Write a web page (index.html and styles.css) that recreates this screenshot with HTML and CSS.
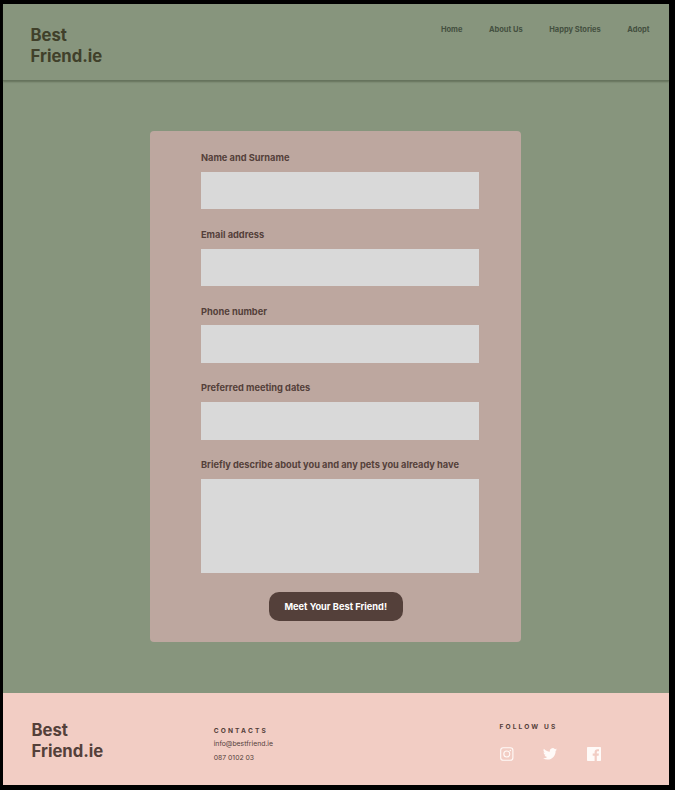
FILE: index.html
```html
<!DOCTYPE html>
<html lang="en">
<head>
<meta charset="utf-8">
<title>Best Friend.ie</title>
<link rel="stylesheet" href="styles.css">
</head>
<body>
<div class="page">
  <header class="header">
    <div class="logo">Best<br>Friend.ie</div>
    <nav class="nav">
      <a>Home</a>
      <a>About Us</a>
      <a>Happy Stories</a>
      <a>Adopt</a>
    </nav>
  </header>
  <main class="main">
    <form class="card">
      <label class="field"><span class="label">Name and Surname</span><input class="input" type="text"></label>
      <label class="field"><span class="label">Email address</span><input class="input" type="text"></label>
      <label class="field"><span class="label">Phone number</span><input class="input" type="text"></label>
      <label class="field"><span class="label">Preferred meeting dates</span><input class="input" type="text"></label>
      <label class="field field-tall"><span class="label">Briefly describe about you and any pets you already have</span><textarea class="input area"></textarea></label>
      <button class="button" type="button">Meet Your Best Friend!</button>
    </form>
  </main>
  <footer class="footer">
    <div class="logo logo-footer">Best<br>Friend.ie</div>
    <div class="contacts">
      <h2 class="heading">CONTACTS</h2>
      <p class="detail">info@bestfriend.ie</p>
      <p class="detail">087 0102 03</p>
    </div>
    <div class="follow">
      <h2 class="heading">FOLLOW US</h2>
      <div class="icons">
        <svg class="icon" viewBox="0 0 14 14" fill="none" stroke="#fffaf8"><rect x=".7" y=".7" width="12.2" height="12.6" rx="2.6" stroke-width="1.1"/><circle cx="6.8" cy="7" r="3" stroke-width="1.1"/><circle cx="10.3" cy="3.6" r=".75" fill="#fffaf8" stroke="none"/></svg>
        <svg class="icon" viewBox="0 2 24 20.5" fill="#fffaf8"><path d="M23.95 4.57a10 10 0 0 1-2.82.77 4.96 4.96 0 0 0 2.16-2.72c-.95.55-2 .95-3.13 1.18a4.92 4.92 0 0 0-8.38 4.48C7.69 8.09 4.07 6.13 1.64 3.16a4.9 4.9 0 0 0 1.52 6.57 4.9 4.9 0 0 1-2.23-.61v.06a4.92 4.92 0 0 0 3.95 4.83 5 5 0 0 1-2.21.08 4.94 4.94 0 0 0 4.6 3.42A9.87 9.87 0 0 1 0 19.54a14 14 0 0 0 7.55 2.21c9.05 0 14-7.5 14-13.98 0-.21 0-.42-.02-.63a9.94 9.94 0 0 0 2.42-2.57z"/></svg>
        <svg class="icon" viewBox="0 0 14 14" fill="#fffaf8"><path d="M.8 0h12.4a.8.8 0 0 1 .8.8v12.4a.8.8 0 0 1-.8.8h-3.4V8.7h1.8l.3-2.1H9.8V5.3c0-.7.3-1.1 1.1-1.1h1.1V2.3c-.3 0-.9-.1-1.6-.1-1.7 0-2.8 1-2.8 2.9v1.5H5.7v2.1h1.9V14H.8a.8.8 0 0 1-.8-.8V.8A.8.8 0 0 1 .8 0z"/></svg>
      </div>
    </div>
  </footer>
</div>
</body>
</html>
```
FILE: styles.css
```css
* { box-sizing: border-box; }
body {
  margin: 0;
  padding: 4px 6px 5px 3px;
  background: #000;
  font-family: Inter, "Liberation Sans", sans-serif;
  color: #54403a;
}
.page {
  height: 781px;
  display: flex;
  flex-direction: column;
  background: #87957d;
}
.header {
  height: 77px;
  flex: none;
  display: flex;
  justify-content: space-between;
  padding: 21px 19.5px 0 27.5px;
  border-bottom: 1px solid #66735d;
  box-shadow: 0 1px 1.5px rgba(50, 60, 40, .4);
}
.logo {
  font-size: 16.7px;
  line-height: 20.5px;
  font-weight: 700;
  color: #40402a;
}
.nav {
  display: flex;
  gap: 26.5px;
  font-size: 7.5px;
  line-height: 10px;
  font-weight: 700;
  color: #445040;
}
.main {
  flex: 1;
  padding: 50px 0 0 147px;
}
.card {
  width: 371px;
  height: 511px;
  padding: 20px 42px 0 51px;
  border-radius: 4px;
  background: #bda79f;
  display: flex;
  flex-direction: column;
}
.field {
  display: block;
  height: 76.8px;
}
.field-tall { height: 133.8px; }
.label {
  display: block;
  height: 20.9px;
  font-size: 9.25px;
  line-height: 13px;
  font-weight: 700;
}
.input {
  display: block;
  width: 278px;
  height: 37.5px;
  padding: 4px;
  border: 0;
  background: #d9d9d9;
  resize: none;
  outline: 0;
}
.area { height: 94px; }
.button {
  width: 133.5px;
  height: 29.5px;
  margin: 0 0 0 68px;
  padding: 0;
  border: 0;
  border-radius: 10px;
  background: #54403a;
  color: #fff;
  font: 700 9.25px/29px Inter, "Liberation Sans", sans-serif;
}
.footer {
  height: 92px;
  flex: none;
  display: grid;
  grid-template-columns: 182.2px 285.8px 1fr;
  padding-left: 28.5px;
  background: #f2cdc4;
}
.logo-footer {
  padding-top: 27px;
  color: #54403a;
}
.contacts { padding-top: 32.5px; }
.follow { padding-top: 28.5px; }
.heading {
  margin: 0;
  font-size: 6.6px;
  line-height: 11px;
  font-weight: 700;
  letter-spacing: 2.15px;
}
.detail {
  margin: 0;
  font-size: 6.85px;
  line-height: 14px;
}
.icons {
  display: flex;
  gap: 29.5px;
  margin: 14.5px 0 0 .5px;
}
.icon {
  width: 14px;
  height: 14px;
}
```
